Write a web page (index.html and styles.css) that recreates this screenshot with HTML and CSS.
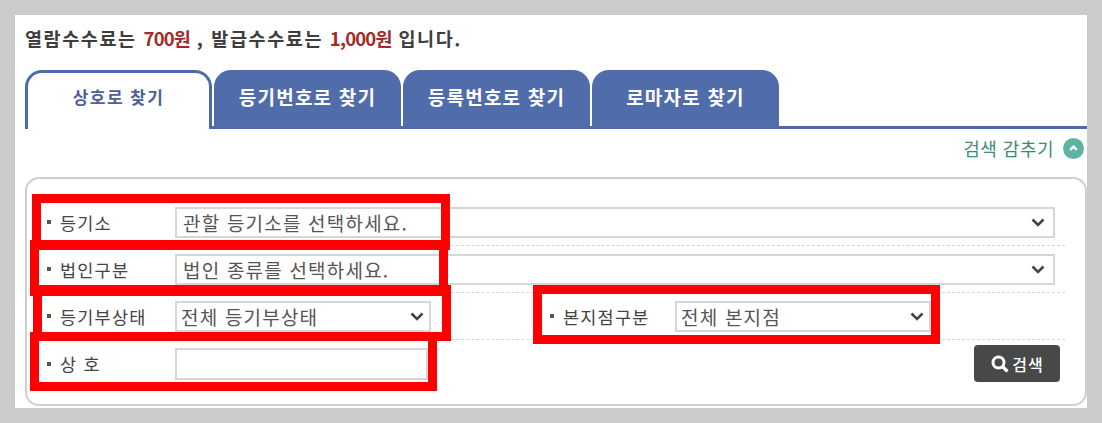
FILE: index.html
```html
<!DOCTYPE html>
<html lang="ko">
<head>
<meta charset="utf-8">
<title>상호로 찾기</title>
<link rel="stylesheet" href="styles.css">
</head>
<body>
<main class="page">
  <p class="notice">열람수수료는 <em>700원</em> , 발급수수료는 <em>1,000원</em> 입니다.</p>
  <nav class="tabs">
    <a class="tab active">상호로 찾기</a>
    <a class="tab">등기번호로 찾기</a>
    <a class="tab">등록번호로 찾기</a>
    <a class="tab">로마자로 찾기</a>
  </nav>
  <div class="toggle">
    <span>검색 감추기</span>
    <svg class="toggle-icon" width="21" height="21" viewBox="0 0 22 22"><circle cx="11" cy="11" r="11" fill="#5fb3a3"/><path d="M7.5 12.5 11 9l3.5 3.5" fill="none" stroke="#fff" stroke-width="2.4"/></svg>
  </div>
  <form class="panel">
    <div class="row">
      <span class="label">등기소</span>
      <div class="select wide"><span>관할 등기소를 선택하세요.</span><svg class="chev" width="14" height="9" viewBox="0 0 14 9"><path d="M1.5 1.5 7 7l5.500-5.500" fill="none" stroke="#444" stroke-width="2.600"/></svg></div>
    </div>
    <div class="row">
      <span class="label">법인구분</span>
      <div class="select wide"><span>법인 종류를 선택하세요.</span><svg class="chev" width="14" height="9" viewBox="0 0 14 9"><path d="M1.5 1.5 7 7l5.500-5.500" fill="none" stroke="#444" stroke-width="2.600"/></svg></div>
    </div>
    <div class="row">
      <span class="label">등기부상태</span>
      <div class="select narrow"><span>전체 등기부상태</span><svg class="chev" width="14" height="9" viewBox="0 0 14 9"><path d="M1.5 1.5 7 7l5.500-5.500" fill="none" stroke="#444" stroke-width="2.600"/></svg></div>
      <span class="label second">본지점구분</span>
      <div class="select narrow"><span>전체 본지점</span><svg class="chev" width="14" height="9" viewBox="0 0 14 9"><path d="M1.5 1.5 7 7l5.500-5.500" fill="none" stroke="#444" stroke-width="2.600"/></svg></div>
    </div>
    <div class="row last">
      <span class="label">상 호</span>
      <div class="input"></div>
      <button class="search" type="button">
        <svg width="20" height="20" viewBox="0 0 20 20"><circle cx="8.500" cy="8.500" r="5.500" fill="none" stroke="#fff" stroke-width="3"/><path d="m12.500 12.500 5 5" stroke="#fff" stroke-width="3.200"/></svg>
        <span>검색</span>
      </button>
    </div>
  </form>
  <div class="mark m1"></div>
  <div class="mark m2"></div>
  <div class="mark m3"></div>
  <div class="mark m4"></div>
  <div class="mark m5"></div>
</main>
</body>
</html>
```

FILE: styles.css
```css
* { box-sizing: border-box; }
html, body { margin: 0; height: 100%; }
body {
  background: #cbcbcb;
  padding: 15px 15px 0;
  font-family: "Noto Sans CJK KR", "Noto Sans", sans-serif;
  overflow: hidden;
}
.page {
  position: relative;
  width: 1072px;
  height: 393px;
  background: #fff;
  padding: 0 0 0 10px;
}
.notice {
  margin: 0;
  height: 55px;
  padding-top: 10px;
  font-size: 18.500px;
  line-height: 26px;
  font-weight: 700;
  color: #3d3d3d;
  letter-spacing: 1.600px;
}
.notice em { font-style: normal; color: #a52a2a; letter-spacing: -0.800px; }
.tabs {
  display: flex;
  gap: 2px;
  height: 59px;
  border-bottom: 3px solid #4c6bab;
}
.tab {
  width: 187px;
  height: 57px;
  background: #506cab;
  border-radius: 17px 17px 0 0;
  color: #fff;
  font-size: 19px;
  font-weight: 700;
  line-height: 20px;
  letter-spacing: 1.200px;
  padding-top: 17px;
  text-align: center;
}
.tab.active {
  height: 59px;
  background: #fff;
  color: #4c6296;
  border: 3px solid #4c6bab;
  border-bottom: 0;
  padding-top: 14px;
  font-size: 17px;
  letter-spacing: 1.400px;
}
.toggle {
  display: flex;
  justify-content: flex-end;
  align-items: center;
  gap: 9px;
  height: 36px;
  padding-right: 3px;
  padding-top: 2px;
  color: #3f8a76;
  font-size: 18px;
  letter-spacing: 0.500px;
}
.panel {
  width: 1062px;
  height: 229px;
  margin-top: 12px;
  padding: 20px 20px 0 14px;
  border: 2px solid #cfcfcf;
  border-radius: 14px;
}
.row {
  display: flex;
  align-items: center;
  height: 47px;
  border-bottom: 1px dashed #d4d4d4;
}
.row.last { border-bottom: 0; }
.label {
  width: 134px;
  flex: none;
  padding-left: 6px;
  font-size: 17.500px;
  letter-spacing: 1.200px;
  color: #444;
  display: flex;
  align-items: center;
  gap: 9px;
}
.label::before {
  content: "";
  width: 4px;
  height: 4px;
  background: #555;
}
.label.second { width: 131px; margin-left: 113px; }
.select {
  display: flex;
  align-items: center;
  justify-content: space-between;
  height: 31px;
  border: 2px solid #d6d6d6;
  font-size: 19px;
  letter-spacing: 1.200px;
  color: #555;
  background: #fff;
}
.select.wide { width: 880px; padding: 0 8px 0 6px; }
.select.narrow { width: 256px; padding: 0 5px 0 4px; }
.chev { flex: none; }
.input {
  width: 253px;
  height: 32px;
  border: 2px solid #d6d6d6;
}
.search {
  display: flex;
  align-items: center;
  justify-content: center;
  gap: 2px;
  width: 86px;
  height: 37px;
  margin-left: auto;
  margin-right: 5px;
  border: 0;
  border-radius: 4px;
  background: #484848;
  color: #fff;
  font: 500 16px "Noto Sans CJK KR", sans-serif;
  letter-spacing: 1px;
}
.mark {
  position: absolute;
  border: 9px solid #ff0000;
}
.m1 { left: 17px; top: 179px; width: 418px; height: 56px; }
.m2 { left: 15px; top: 225px; width: 418px; height: 56px; }
.m3 { left: 18px; top: 270px; width: 418px; height: 56px; }
.m4 { left: 15px; top: 317px; width: 407px; height: 59px; }
.m5 { left: 518px; top: 270px; width: 407px; height: 59px; }
```
